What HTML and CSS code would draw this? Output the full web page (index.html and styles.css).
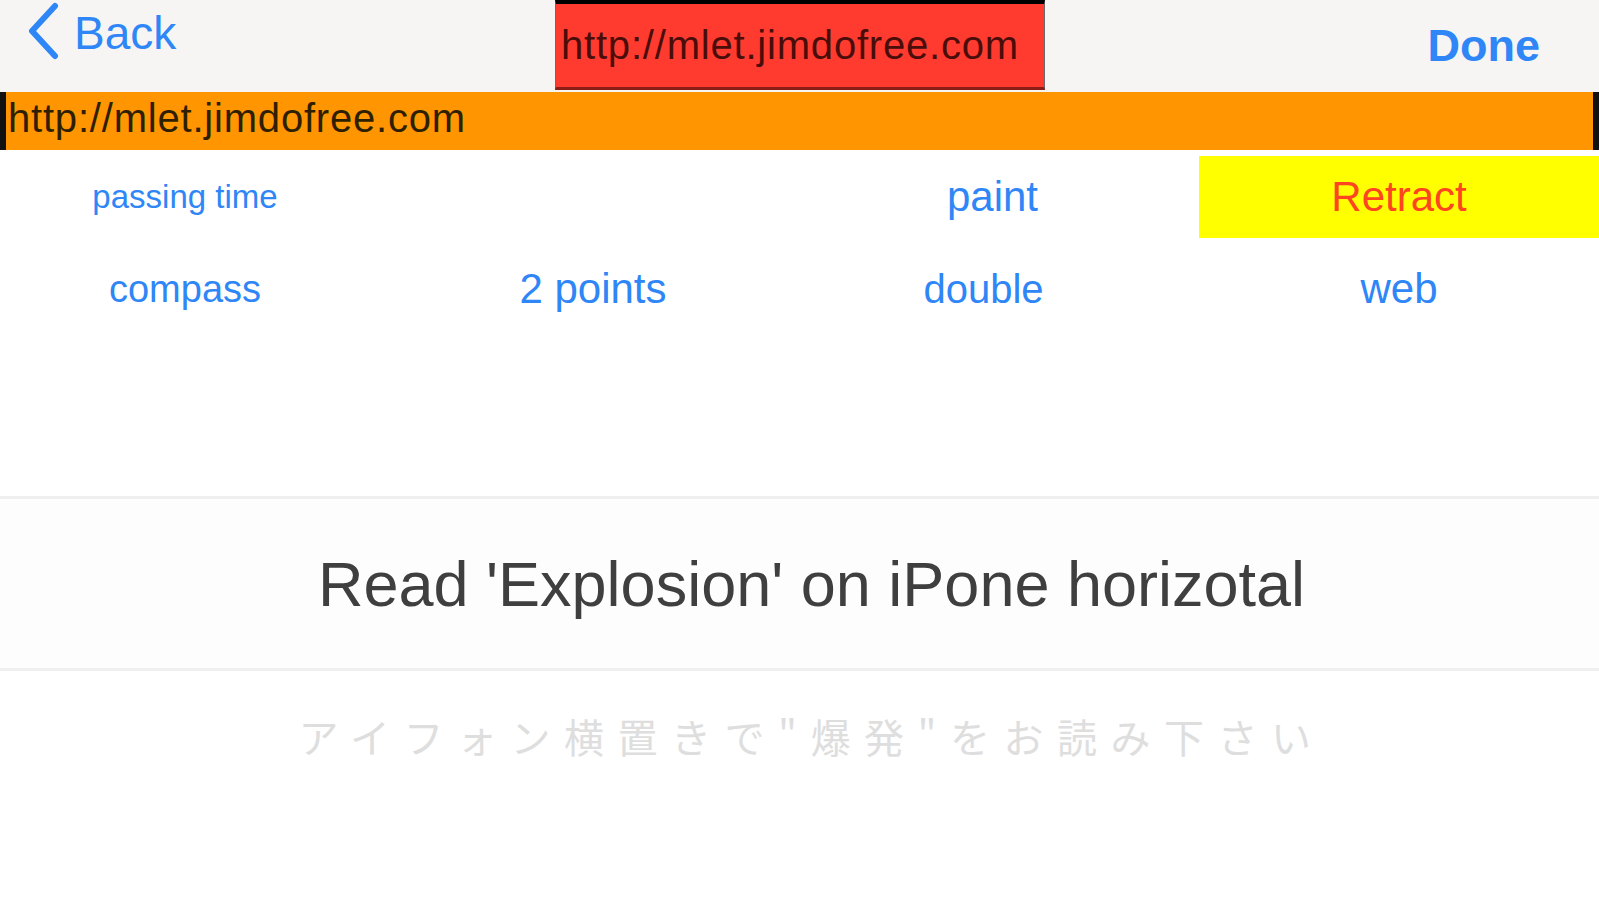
FILE: index.html
```html
<!DOCTYPE html>
<html lang="ja">
<head>
  <meta charset="UTF-8" />
  <meta name="viewport" content="width=device-width, initial-scale=1.0" />
  <title>Explosion</title>
  <link rel="stylesheet" href="styles.css">
</head>
<body>
  <div class="navbar">
    <a class="back">
      <svg class="chevron" width="34" height="58" viewBox="0 0 34 58">
        <path d="M29 4 L6 29 L29 54" fill="none" stroke="#2f86f6" stroke-width="6" stroke-linecap="round" stroke-linejoin="round"/>
      </svg>
      <span>Back</span>
    </a>
    <div class="titulo">http://mlet.jimdofree.com</div>
    <a class="done">Done</a>
  </div>

  <div class="urlbar">http://mlet.jimdofree.com</div>

  <div class="botones">
    <a class="chico">passing time</a>
    <span></span>
    <a class="col3">paint</a>
    <a class="retract">Retract</a>
    <a class="compass">compass</a>
    <a>2 points</a>
    <a class="col3 double">double</a>
    <a>web</a>
  </div>

  <div class="mensaje">Read 'Explosion' on iPone horizotal</div>
  <div class="nota">アイフォン横置きで"爆発"をお読み下さい</div>
</body>
</html>
```

FILE: styles.css
```css
body {
  margin: 0;
  font-family: "Liberation Sans", Arial, sans-serif;
  background-color: #fff;
  color: #333;
}
.navbar {
  display: grid;
  grid-template-columns: 555px 490px 1fr;
  height: 92px;
  background-color: #f6f5f4;
}
.back {
  display: flex;
  align-items: flex-start;
  padding: 2px 0 0 26px;
  color: #2f86f6;
  font-size: 46px;
}
.back span {
  margin-left: 14px;
  line-height: 62px;
}
.titulo {
  box-sizing: border-box;
  height: 90px;
  display: flex;
  align-items: center;
  padding-left: 5px;
  background-color: #ff3b30;
  border-top: 4px solid #000;
  border-bottom: 3px solid #8b1c16;
  border-left: 1px solid #6b6b6b;
  border-right: 1px solid #6b6b6b;
  font-size: 40px;
  letter-spacing: 0.8px;
  color: #4a0d09;
}
.done {
  display: flex;
  align-items: center;
  justify-content: flex-end;
  padding-right: 59px;
  font-size: 45px;
  font-weight: bold;
  color: #2f86f6;
}
.urlbar {
  box-sizing: border-box;
  height: 58px;
  line-height: 52px;
  padding-left: 2px;
  background-color: #ff9500;
  border-left: 6px solid #111;
  border-right: 6px solid #111;
  font-size: 40px;
  letter-spacing: 0.8px;
  color: #2e1f00;
}
.botones {
  display: grid;
  grid-template-columns: 370px 446px 383px 400px;
  grid-template-rows: 82px 102px;
  margin-top: 6px;
  font-size: 42px;
  color: #2f86f6;
}
.botones a {
  display: flex;
  align-items: center;
  justify-content: center;
}
.botones .chico {
  font-size: 33px;
}
.botones .compass {
  font-size: 38px;
}
.botones .col3 {
  padding-right: 30px;
}
.botones .double {
  padding-right: 48px;
  font-size: 40px;
}
.botones .retract {
  background-color: #ffff00;
  color: #ff4420;
}
.mensaje {
  box-sizing: border-box;
  height: 175px;
  margin-top: 156px;
  padding-left: 24px;
  display: flex;
  align-items: center;
  justify-content: center;
  background-color: #fdfdfd;
  border-top: 3px solid #efefef;
  border-bottom: 3px solid #efefef;
  font-size: 63px;
  color: #3f3f3f;
}
.nota {
  margin-top: 36px;
  padding-left: 24px;
  text-align: center;
  font-family: "Noto Sans CJK JP", sans-serif;
  font-size: 40px;
  letter-spacing: 13.5px;
  color: #dedede;
}
```
